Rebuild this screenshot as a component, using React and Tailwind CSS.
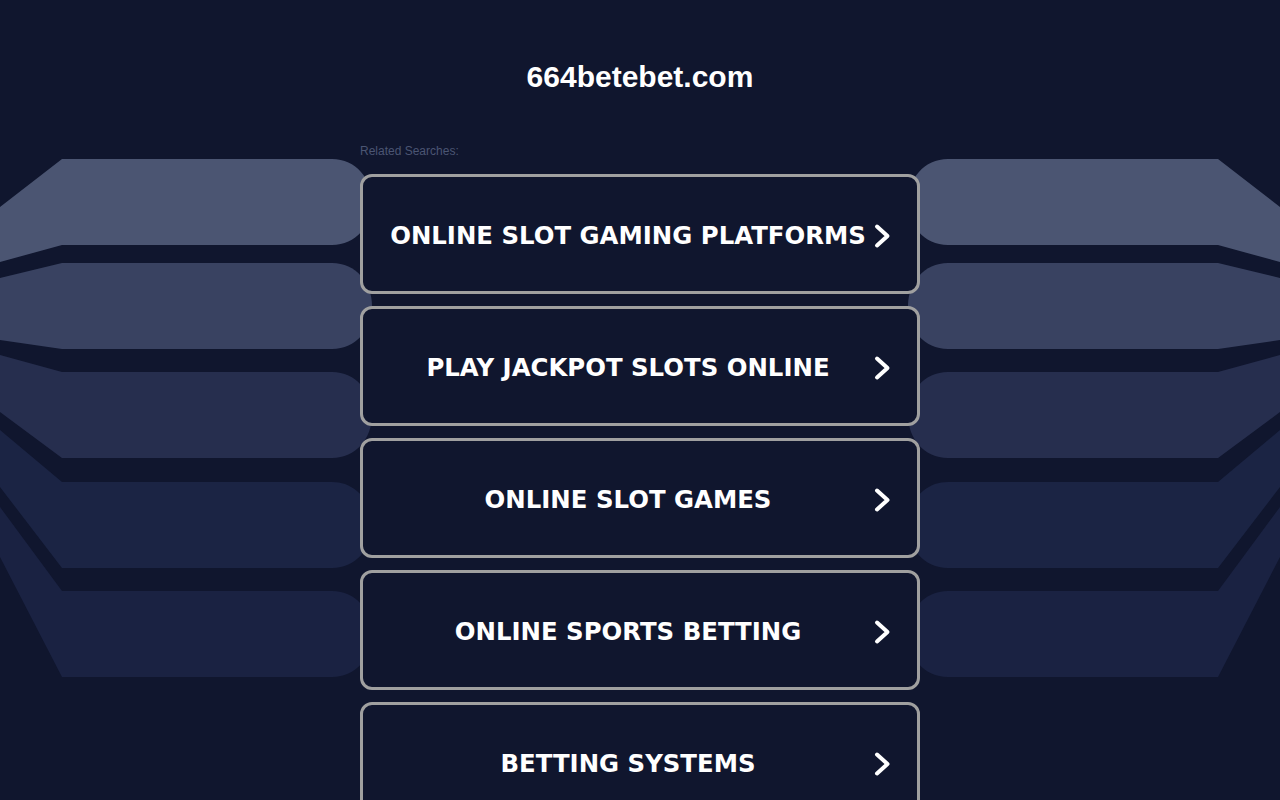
const searches = [
  'ONLINE SLOT GAMING PLATFORMS',
  'PLAY JACKPOT SLOTS ONLINE',
  'ONLINE SLOT GAMES',
  'ONLINE SPORTS BETTING',
  'BETTING SYSTEMS'
];

// left-hand bands, mirrored for the right side
const bands = [
  { top: 159, bottom: 245, topEdge: 207, bottomEdge: 262, fill: '#4b5572' },
  { top: 263, bottom: 349, topEdge: 278, bottomEdge: 340, fill: '#394261' },
  { top: 372, bottom: 458, topEdge: 355, bottomEdge: 412, fill: '#262e4e' },
  { top: 482, bottom: 568, topEdge: 430, bottomEdge: 487, fill: '#1b2444' },
  { top: 591, bottom: 677, topEdge: 507, bottomEdge: 557, fill: '#1a2242' }
];

function bandPath(b) {
  const mid = (b.top + b.bottom) / 2;
  return `M0,${b.topEdge} L62,${b.top} L332,${b.top} C356,${b.top} 372,${b.top + 20} 372,${mid} C372,${b.bottom - 20} 356,${b.bottom} 332,${b.bottom} L62,${b.bottom} L0,${b.bottomEdge} Z`;
}

function Backdrop() {
  return (
    <svg className="absolute inset-0 pointer-events-none" width="1280" height="800" viewBox="0 0 1280 800">
      <g>
        {bands.map((b, i) => (
          <path key={i} d={bandPath(b)} fill={b.fill} />
        ))}
      </g>
      <g transform="translate(1280,0) scale(-1,1)">
        {bands.map((b, i) => (
          <path key={i} d={bandPath(b)} fill={b.fill} />
        ))}
      </g>
    </svg>
  );
}

function SearchButton({ label }) {
  return (
    <a
      href="#"
      className="flex items-center h-[120px] w-[560px] px-[26px] pt-[4px] rounded-[12px] border-[3px] border-[#a0a0a0] bg-[#10162e]"
    >
      <span
        className="flex-1 text-center whitespace-nowrap text-white font-bold text-[24.4px] leading-none"
        style={{ fontFamily: '"DejaVu Sans", Verdana, sans-serif' }}
      >
        {label}
      </span>
      <svg width="24" height="28" viewBox="0 0 24 28" fill="none">
        <polyline
          points="10,4.5 20.5,14 10,23.5"
          stroke="#ffffff"
          strokeWidth="4"
          strokeLinecap="round"
          strokeLinejoin="round"
        />
      </svg>
    </a>
  );
}

export default function App() {
  return (
    <div className="relative min-h-screen overflow-hidden bg-[#10162e]">
      <Backdrop />
      <div className="relative flex flex-col items-center">
        <h1
          className="pt-[60px] text-[30px] leading-[34px] font-bold text-white"
          style={{ fontFamily: '"Liberation Sans", Arial, sans-serif' }}
        >
          664betebet.com
        </h1>
        <div className="w-[560px] mt-[50px]">
          <p
            className="text-[12px] leading-[14px] text-[#4b5573]"
            style={{ fontFamily: '"Liberation Sans", Arial, sans-serif' }}
          >
            Related Searches:
          </p>
          <div className="mt-[16px] flex flex-col gap-[12px]">
            {searches.map((s) => (
              <SearchButton key={s} label={s} />
            ))}
          </div>
        </div>
      </div>
    </div>
  );
}
